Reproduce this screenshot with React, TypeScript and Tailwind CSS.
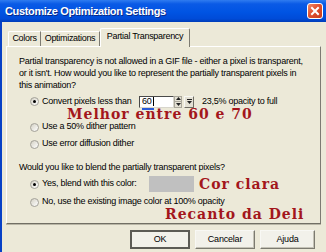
const sans = "font-['Liberation_Sans',Arial,sans-serif]";
const red = "font-['DejaVu_Serif',serif] font-bold text-[14px] tracking-[1px] text-[#a3161c]";

const Radio = ({ checked }: { checked?: boolean }) => (
  <span className="w-[9px] h-[9px] shrink-0 rounded-full border border-[#a3a199] bg-[linear-gradient(135deg,#d4d1c4,#ffffff)] flex items-center justify-center">
    {checked && <span className="w-[3px] h-[3px] rounded-full bg-black" />}
  </span>
);

const Btn = ({ label, w, primary }: { label: string; w: string; primary?: boolean }) => (
  <div
    className={`${w} h-[19px] flex items-center justify-center bg-[#f2f1ea] text-[9px] tracking-[-0.2px] text-black ${
      primary
        ? "border-2 border-[#5c5b55]"
        : "border border-[#f8f8f4] border-r-[#7c7a70] border-b-[#7c7a70] shadow-[inset_-1px_-1px_#c4c2b6]"
    }`}
  >
    {label}
  </div>
);

export default function App() {
  return (
    <div className={`w-[326px] h-[252px] overflow-hidden bg-[#ece9d8] flex flex-col ${sans}`}>
      {/* title bar */}
      <div className="h-[22px] shrink-0 flex items-center justify-between pl-[5px] pr-[3px] bg-[linear-gradient(180deg,#2f7cf0_0%,#0a5ae6_18%,#0054e3_55%,#004bd8_85%,#003db8_100%)]">
        <span className="text-white font-bold text-[11px] tracking-[-0.35px] [text-shadow:1px_1px_#0a2a88]">
          Customize Optimization Settings
        </span>
        <div className="w-[16px] h-[16px] rounded-[3px] border border-white bg-[linear-gradient(135deg,#f08a6a,#e0502f_45%,#c83c1c)] flex items-center justify-center">
          <svg width="10" height="10" viewBox="0 0 10 10">
            <path d="M2 2 L8 8 M8 2 L2 8" stroke="white" strokeWidth="2" strokeLinecap="square" />
          </svg>
        </div>
      </div>

      <div className="flex-1 flex flex-col border-l-2 border-[#0841c6] pl-[4px]">
        {/* tabs */}
        <div className="flex items-end pt-[6px] pl-[2px] text-[9px] tracking-[-0.3px] text-black">
          <div className="w-[33px] h-[15px] flex items-center justify-center border-l border-t border-white border-r border-r-[#7d7b72] rounded-tl-[2px]">
            Colors
          </div>
          <div className="w-[59px] h-[15px] flex items-center justify-center border-t border-white border-r border-r-[#7d7b72]">
            Optimizations
          </div>
          <div className="relative z-10 -mb-px w-[90px] h-[19px] flex items-center justify-center pb-[2px] bg-[#ece9d8] border-l border-t border-white border-r border-r-[#7d7b72] rounded-t-[2px]">
            Partial Transparency
          </div>
        </div>

        {/* panel */}
        <div className="w-[315px] h-[178px] border border-white border-r-[#7d7b72] border-b-[#716f64] shadow-[0_1px_#b9b6a6] pt-[8px] pl-[12px] text-[9px] tracking-[-0.25px] text-black">
          <p className="leading-[12px] whitespace-nowrap">
            Partial transparency is not allowed in a GIF file - either a pixel is transparent,
            <br />
            or it isn't. How would you like to represent the partially transparent pixels in
            <br />
            this animation?
          </p>

          <div className="mt-[4px] h-[13px] flex items-center pl-[11px]">
            <Radio checked />
            <span className="ml-[3px] w-[97px]">Convert pixels less than</span>
            <div className="w-[35px] h-[12px] bg-white border border-[#4a4a4a] border-r-[#d8d6cc] border-b-[#d8d6cc] relative flex items-center pl-[2px] leading-none">
              60
              <span className="w-px h-[9px] bg-black ml-px" />
              <span className="absolute left-[2px] -bottom-[3px] w-[12px] h-[2px] bg-[#2a5bd8]" />
            </div>
            <div className="w-[8px] h-[12px] flex flex-col">
              <div className="flex-1 flex items-center justify-center bg-[#e4e1d4] border border-[#aaa79b]">
                <svg width="5" height="3" viewBox="0 0 5 3"><path d="M0 3 L2.5 0 L5 3Z" fill="#222" /></svg>
              </div>
              <div className="flex-1 flex items-center justify-center bg-[#e4e1d4] border border-[#aaa79b] border-t-0">
                <svg width="5" height="3" viewBox="0 0 5 3"><path d="M0 0 L2.5 3 L5 0Z" fill="#222" /></svg>
              </div>
            </div>
            <div className="ml-[2px] w-[10px] h-[12px] flex flex-col items-center justify-center gap-[1px] bg-[#e4e1d4] border border-[#f8f8f4] border-r-[#6f6d64] border-b-[#6f6d64]">
              <span className="w-[5px] h-px bg-[#222]" />
              <svg width="5" height="3" viewBox="0 0 5 3"><path d="M0 0 L2.5 3 L5 0Z" fill="#222" /></svg>
            </div>
            <span className="ml-[8px]">23,5% opacity to full</span>
          </div>

          <div className={`h-[13px] leading-[12px] pl-[48px] ${red}`}>Melhor entre 60 e 70</div>

          <div className="h-[12px] flex items-center pl-[11px]">
            <Radio />
            <span className="ml-[3px]">Use a 50% dither pattern</span>
          </div>
          <div className="mt-[5px] h-[12px] flex items-center pl-[11px]">
            <Radio />
            <span className="ml-[3px]">Use error diffusion dither</span>
          </div>

          <p className="mt-[11px] h-[12px] leading-[12px]">Would you like to blend the partially transparent pixels?</p>

          <div className="mt-[3px] h-[16px] flex items-center pl-[11px]">
            <Radio checked />
            <span className="ml-[3px] w-[107px]">Yes, blend with this color:</span>
            <div className="w-[45px] h-[16px] bg-[#c0c0c0]" />
            <span className={`ml-[5px] leading-[16px] ${red}`}>Cor clara</span>
          </div>

          <div className="mt-[4px] h-[12px] flex items-center pl-[11px]">
            <Radio />
            <span className="ml-[3px]">No, use the existing image color at 100% opacity</span>
          </div>

          <div className={`-mt-[1px] h-[14px] leading-[14px] pl-[146px] ${red}`}>Recanto da Deli</div>
        </div>

        {/* buttons */}
        <div className="mt-[6px] flex justify-end gap-[5px] pr-[11px]">
          <Btn label="OK" w="w-[60px]" primary />
          <Btn label="Cancelar" w="w-[60px]" />
          <Btn label="Ajuda" w="w-[55px]" />
        </div>
      </div>
    </div>
  );
}
